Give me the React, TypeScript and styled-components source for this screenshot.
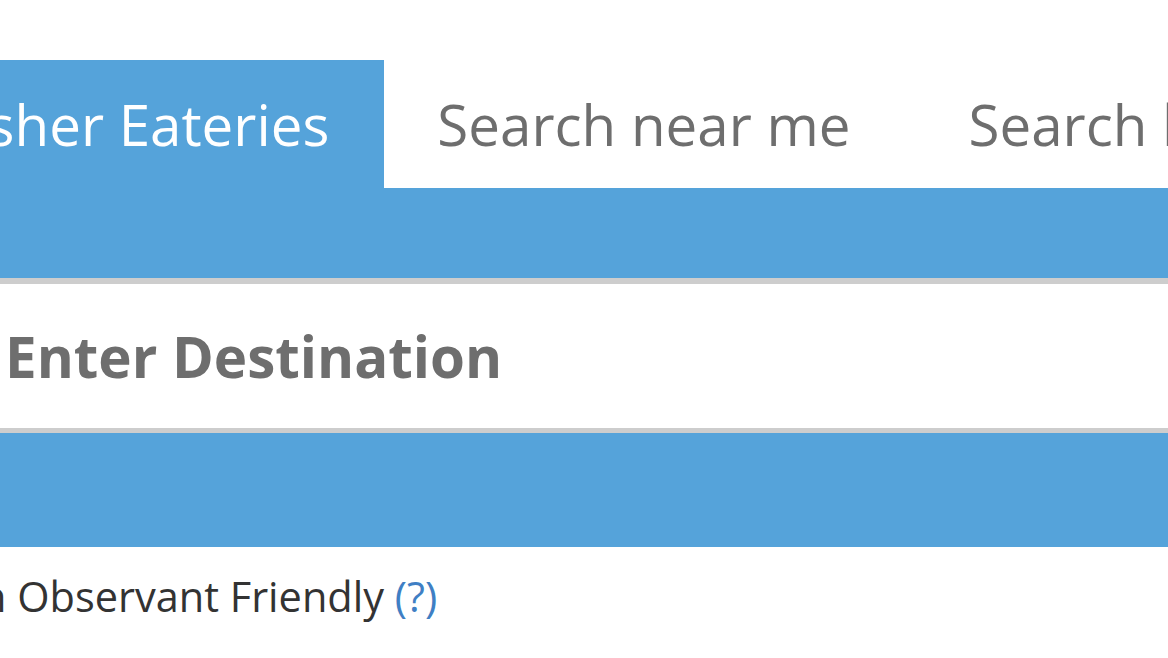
import React from 'react';
import styled, { createGlobalStyle } from 'styled-components';

const GlobalStyle = createGlobalStyle`
  html, body {
    margin: 0;
    padding: 0;
    background: #ffffff;
    overflow: hidden;
  }
  body {
    font-family: "Open Sans", "Liberation Sans", sans-serif;
  }
`;

// the page is shown scrolled a little to the right, so the left edge is cut
const Page = styled.div`
  margin-left: -134px;
  width: calc(100% + 134px);
  padding-top: 60px;
`;

const TabBar = styled.div`
  display: flex;
  white-space: nowrap;
`;

const Tab = styled.div<{ active?: boolean }>`
  flex: none;
  box-sizing: border-box;
  height: 128px;
  line-height: 128px;
  padding: 1px 55px 0 53px;
  margin-right: ${p => (p.active ? 0 : 10)}px;
  font-size: 56.5px;
  font-weight: 400;
  color: ${p => (p.active ? '#ffffff' : '#6e6e6e')};
  background: ${p => (p.active ? '#55a3da' : 'transparent')};
`;

const Band = styled.div<{ h: number }>`
  height: ${p => p.h}px;
  background: #55a3da;
`;

const DestinationInput = styled.input`
  display: block;
  box-sizing: border-box;
  width: 100%;
  height: 155px;
  margin: 0;
  padding: 0 0 0 139px;
  border: none;
  border-top: 6px solid #cdcdcd;
  border-bottom: 5px solid #cdcdcd;
  outline: none;
  background: #ffffff;
  font-family: "Open Sans", "Liberation Sans", sans-serif;
  font-size: 56.5px;
  font-weight: 700;
  color: #6e6e6e;

  &::placeholder {
    color: #6e6e6e;
    opacity: 1;
  }
`;

const Option = styled.label`
  display: block;
  margin-top: 19px;
  padding-left: 34px;
  font-size: 41.5px;
  line-height: 60px;
  color: #333333;
  white-space: nowrap;
`;

const Help = styled.a`
  color: #3f7fc4;
  text-decoration: none;
`;

export default function App() {
  return (
    <>
      <GlobalStyle />
      <Page>
        <TabBar>
          <Tab active>Kosher Eateries</Tab>
          <Tab>Search near me</Tab>
          <Tab>Search by name</Tab>
        </TabBar>
        <Band h={90} />
        <DestinationInput placeholder="Enter Destination" />
        <Band h={114} />
        <Option>
          Open Observant Friendly <Help href="#">(?)</Help>
        </Option>
      </Page>
    </>
  );
}
